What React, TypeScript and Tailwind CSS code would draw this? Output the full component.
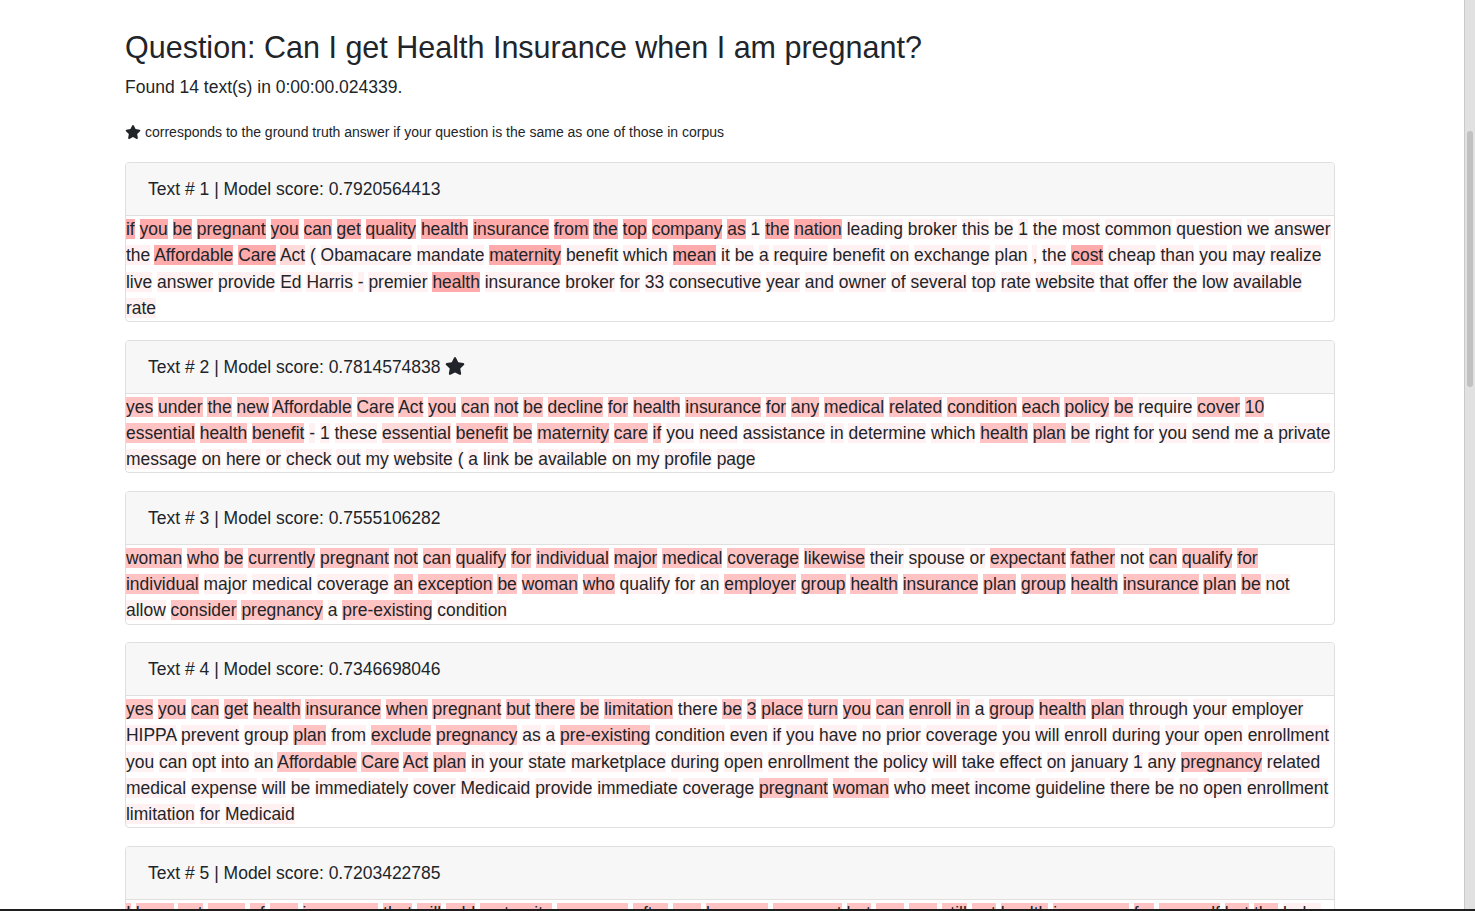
import React from 'react';

// word markers: ^ strong, * medium, ~ light, none = faint
const cards = [
  {
    n: 1,
    score: '0.7920564413',
    star: false,
    text: '^if ^you ^be ^pregnant ^you ^can ^get ^quality ^health ^insurance ^from ^the ^top ^company ^as 1 ^the ^nation leading broker this be 1 the most common question we answer the ^Affordable ^Care ~Act ( Obamacare mandate ^maternity benefit which ^mean it be a require benefit on exchange plan , the ^cost cheap than you may realize live answer provide Ed Harris - premier ^health insurance broker for 33 consecutive year and owner of several top rate website that offer the low available rate',
  },
  {
    n: 2,
    score: '0.7814574838',
    star: true,
    text: '*yes *under *the *new *Affordable *Care *Act *you *can *not *be *decline *for *health *insurance *for *any *medical *related *condition *each *policy *be require *cover *10 *essential *health *benefit - 1 these ~essential *benefit *be *maternity *care *if you need assistance in determine which *health *plan ~be right for you send me a private message on here or check out my website ( a link be available on my profile page',
  },
  {
    n: 3,
    score: '0.7555106282',
    star: false,
    text: '*woman *who *be *currently *pregnant *not *can *qualify *for *individual *major *medical *coverage *likewise their spouse or *expectant *father not *can *qualify *for *individual major medical coverage *an *exception *be *woman *who qualify for an *employer *group *health *insurance *plan *group *health *insurance *plan *be not allow *consider *pregnancy a *pre-existing condition',
  },
  {
    n: 4,
    score: '0.7346698046',
    star: false,
    text: '*yes *you *can *get *health *insurance *when *pregnant *but *there *be *limitation there *be *3 *place *turn *you *can *enroll *in a *group *health *plan through your employer HIPPA prevent group *plan from *exclude *pregnancy as a *pre-existing condition even if you have no prior coverage you will enroll during your open enrollment you can opt into an *Affordable *Care *Act *plan in your state marketplace during open enrollment the policy will take effect on january 1 any *pregnancy related medical expense will be immediately cover Medicaid provide immediate coverage *pregnant *woman who meet income guideline there be no open enrollment limitation for Medicaid',
  },
  {
    n: 5,
    score: '0.7203422785',
    star: false,
    text: '*I *have *not *seen *of *any *insurance *that *will *add *maternity *coverage *after *you *become *pregnant *but *you *can *still *get *health *insurance *for *yourself *but *the baby will not be cover until it be born',
  },
];

function Star({ className }: { className: string }) {
  return (
    <svg viewBox="0 0 576 512" className={className} fill="#212529">
      <path d="M259.3 17.8L194 150.2 47.9 171.5c-26.2 3.8-36.7 36.1-17.7 54.6l105.7 103-25 145.5c-4.5 26.3 23.2 46 46.4 33.7L288 439.6l130.7 68.7c23.2 12.2 50.9-7.4 46.4-33.7l-25-145.5 105.7-103c19-18.5 8.5-50.8-17.7-54.6L382 150.2 316.7 17.8c-11.7-23.6-45.6-23.9-57.4 0z" />
    </svg>
  );
}

function Word({ raw }: { raw: string }) {
  let bg = 'bg-[#fff1f1]';
  let w = raw;
  if (raw.startsWith('^')) {
    bg = 'bg-[#ffabab]';
    w = raw.slice(1);
  } else if (raw.startsWith('*')) {
    bg = 'bg-[#ffc3c3]';
    w = raw.slice(1);
  } else if (raw.startsWith('~')) {
    bg = 'bg-[#ffdada]';
    w = raw.slice(1);
  }
  return <span className={bg}>{w}</span>;
}

function Card({ n, score, star, text }: { n: number; score: string; star: boolean; text: string }) {
  const words = text.split(' ');
  return (
    <div className="border border-[#dfdfdf] rounded-[4px] overflow-hidden">
      <div className="bg-[#f7f7f7] border-b border-[#dfdfdf] px-[22px] py-[13px] text-[17.5px] leading-[26px]">
        Text # {n} | Model score: {score}
        {star && (
          <>
            {' '}
            <Star className="inline-block w-[20px] h-[18px] align-[-2px]" />
          </>
        )}
      </div>
      <div className="text-[17.45px] leading-[26.25px]">
        {words.map((w, i) => (
          <React.Fragment key={i}>
            <Word raw={w} />
            {i < words.length - 1 ? ' ' : ''}
          </React.Fragment>
        ))}
      </div>
    </div>
  );
}

export default function App() {
  return (
    <div className="h-[911px] flex flex-col bg-white text-[#212529] font-['Liberation_Sans',Arial,sans-serif]">
      <div className="flex flex-1 min-h-0">
        <main className="flex-1 overflow-hidden pl-[125px] pt-[29px]">
          <div className="w-[1210px]">
            <h2 className="text-[30.5px] leading-[36px] font-normal">
              Question: Can I get Health Insurance when I am pregnant?
            </h2>
            <p className="mt-[9px] text-[17.5px] leading-[26px]">Found 14 text(s) in 0:00:00.024339.</p>
            <p className="mt-[22px] text-[14px] leading-[20px] flex items-center gap-[4px]">
              <Star className="w-[16px] h-[14px]" />
              corresponds to the ground truth answer if your question is the same as one of those in corpus
            </p>
            <div className="mt-[20px] flex flex-col gap-[17.5px]">
              {cards.map((c) => (
                <Card key={c.n} {...c} />
              ))}
            </div>
          </div>
        </main>
        <div className="w-[11px] border-l border-[#c9c9c9] bg-[#e1e1e1] pt-[131px] pl-[2px]">
          <div className="h-[256px] w-[6px] rounded-full bg-[#c1c1c1]" />
        </div>
      </div>
      <div className="h-[2px] bg-[#1e1e1e]" />
    </div>
  );
}
